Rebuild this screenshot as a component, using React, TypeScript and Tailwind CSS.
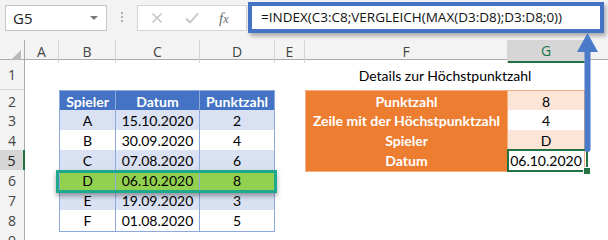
import React from 'react';

const COLS = 'grid grid-cols-[25px_34px_57px_84px_75px_30px_203px_77px_23px]';
const ui = { fontFamily: '"Open Sans", "Noto Sans", sans-serif' };
const cell = { fontFamily: 'Lato, "Noto Sans", sans-serif' };

const players = [
  { s: 'A', d: '15.10.2020', p: '2' },
  { s: 'B', d: '30.09.2020', p: '4' },
  { s: 'C', d: '07.08.2020', p: '6' },
  { s: 'D', d: '06.10.2020', p: '8' },
  { s: 'E', d: '19.09.2020', p: '3' },
  { s: 'F', d: '01.08.2020', p: '5' },
];

const details = [
  { label: 'Punktzahl', value: '8' },
  { label: 'Zeile mit der Höchstpunktzahl', value: '4' },
  { label: 'Spieler', value: 'D' },
  { label: 'Datum', value: '06.10.2020' },
];

function RowHead({ n, active }: { n: number; active?: boolean }) {
  return (
    <div
      style={ui}
      className={
        active
          ? 'flex items-center justify-center border-b border-[#d4d4d4] border-r-2 border-r-[#217346] bg-[#d6d6d6] text-[14px] text-[#222]'
          : 'flex items-center justify-center border-b border-r border-[#d4d4d4] border-r-[#ababab] bg-[#f3f3f3] text-[14px] text-[#444]'
      }
    >
      {n}
    </div>
  );
}

export default function App() {
  return (
    <div className="relative w-[608px] h-[240px] overflow-hidden bg-white">
      {/* Formelleiste */}
      <div className="flex items-start h-[40px] bg-[#f3f3f3]">
        <div
          style={ui}
          className="mt-[5px] ml-[5px] w-[102px] h-[26px] bg-white border border-[#c6c6c6] flex items-center justify-between pl-[7px] pr-[8px] text-[15px] text-[#222]"
        >
          <span>G5</span>
          <span className="w-0 h-0 border-l-[4px] border-r-[4px] border-t-[4px] border-l-transparent border-r-transparent border-t-[#7a7a7a]" />
        </div>
        <div className="mt-[12px] ml-[14px] flex flex-col gap-[2px]">
          <span className="w-[2px] h-[2px] bg-[#b0b0b0]" />
          <span className="w-[2px] h-[2px] bg-[#b0b0b0]" />
          <span className="w-[2px] h-[2px] bg-[#b0b0b0]" />
        </div>
        <div className="mt-[5px] ml-[14px] w-[110px] h-[26px] bg-white border border-[#d4d4d4] flex items-center">
          <svg width="12" height="12" viewBox="0 0 12 12" className="ml-[13px]">
            <path d="M1.5 1.5 L10.5 10.5 M10.5 1.5 L1.5 10.5" stroke="#c3c3c3" strokeWidth="1.6" fill="none" />
          </svg>
          <svg width="14" height="12" viewBox="0 0 14 12" className="ml-[22px]">
            <path d="M1 6.5 L5 10.5 L13 1.5" stroke="#c3c3c3" strokeWidth="1.8" fill="none" />
          </svg>
          <span className="ml-[20px] text-[15px] italic text-[#6d6d6d]" style={{ fontFamily: '"Liberation Serif", serif' }}>
            f<span className="text-[12px]">x</span>
          </span>
        </div>
        <div
          style={ui}
          className="mt-[2px] ml-[1px] w-[356px] h-[31px] bg-white border-[4px] border-[#4472c4] shadow-[2px_3px_4px_rgba(0,0,0,0.3)] flex items-center pl-[9px] text-[13.5px] text-[#111] whitespace-nowrap"
        >
          =INDEX(C3:C8;VERGLEICH(MAX(D3:D8);D3:D8;0))
        </div>
      </div>

      {/* Spaltenköpfe */}
      <div style={ui} className={`${COLS} h-[20px] bg-[#f3f3f3] text-[14px] text-[#444] border-b border-[#ababab]`}>
        <div className="relative border-r border-[#ababab]">
          <span className="absolute right-[3px] bottom-[3px] w-0 h-0" style={{ borderBottom: '10px solid #b9b9b9', borderLeft: '10px solid transparent' }} />
        </div>
        {['A', 'B', 'C', 'D', 'E', 'F'].map((c) => (
          <div key={c} className="flex items-center justify-center border-r border-[#d4d4d4]">
            {c}
          </div>
        ))}
        <div className="flex items-center justify-center border-r border-[#d4d4d4] bg-[#d6d6d6] border-b-2 border-b-[#217346] text-[#217346]">
          G
        </div>
        <div />
      </div>

      {/* Zeile 1 */}
      <div style={cell} className={`${COLS} h-[30px] text-[14px] text-black`}>
        <RowHead n={1} />
        <div />
        <div />
        <div />
        <div />
        <div />
        <div className="col-span-2 flex items-center justify-center">Details zur Höchstpunktzahl</div>
        <div />
      </div>

      {/* Zeile 2: Kopfzeile */}
      <div style={cell} className={`${COLS} h-[20px] text-[14px] text-black`}>
        <RowHead n={2} />
        <div />
        <div className="flex items-center justify-center bg-[#4472c4] text-white font-bold border border-[#8ea9db]">Spieler</div>
        <div className="flex items-center justify-center bg-[#4472c4] text-white font-bold border-y border-r border-[#8ea9db]">Datum</div>
        <div className="flex items-center justify-center bg-[#4472c4] text-white font-bold border-y border-r border-[#8ea9db]">Punktzahl</div>
        <div />
        <div className="flex items-center justify-center bg-[#ed7d31] text-white font-bold border border-[#f4b084]">{details[0].label}</div>
        <div className="flex items-center justify-center bg-[#fce4d6] border-y border-r border-[#f4b084]">{details[0].value}</div>
        <div />
      </div>

      {players.map((pl, i) => {
        const n = i + 3;
        const bg = pl.s === 'D' ? 'bg-[#92d050]' : i % 2 === 0 ? 'bg-[#d9e1f2]' : 'bg-white';
        const d = details[i + 1];
        return (
          <div key={pl.s} style={cell} className={`${COLS} h-[20px] text-[14px] text-black`}>
            <RowHead n={n} active={n === 5} />
            <div />
            <div className={`flex items-center justify-center border-x border-b border-[#8ea9db] ${bg}`}>{pl.s}</div>
            <div className={`flex items-center justify-center border-r border-b border-[#8ea9db] ${bg}`}>{pl.d}</div>
            <div className={`flex items-center justify-center border-r border-b border-[#8ea9db] ${bg}`}>{pl.p}</div>
            <div />
            {d ? (
              <>
                <div className="flex items-center justify-center bg-[#ed7d31] text-white font-bold border-x border-b border-[#f4b084]">{d.label}</div>
                <div className={`flex items-center justify-center border-r border-b border-[#f4b084] ${i % 2 === 0 ? 'bg-white' : 'bg-[#fce4d6]'}`}>{d.value}</div>
              </>
            ) : (
              <>
                <div />
                <div />
              </>
            )}
            <div />
          </div>
        );
      })}

      <div style={cell} className={`${COLS} h-[20px] text-[14px]`}>
        <RowHead n={9} />
      </div>

      {/* Markierung Zeile D */}
      <div className="absolute left-[56px] top-[170px] w-[221px] h-[23px] border-[3px] border-[#1fa88b] shadow-[0_3px_5px_rgba(0,0,0,0.35)]" />

      {/* Auswahl G5 */}
      <div className="absolute left-[507px] top-[149px] w-[81px] h-[23px] border-2 border-[#217346]">
        <span className="absolute -right-[4px] -bottom-[4px] w-[6px] h-[6px] bg-[#217346] outline outline-1 outline-white" />
      </div>

      {/* Pfeil */}
      <svg className="absolute left-0 top-0" width="608" height="240" viewBox="0 0 608 240">
        <path d="M587.5 33 L598 52 L577 52 Z" fill="#4a7bc8" />
        <line x1="587.5" y1="51" x2="587.5" y2="149" stroke="#4a7bc8" strokeWidth="6" strokeLinecap="round" />
      </svg>
    </div>
  );
}
